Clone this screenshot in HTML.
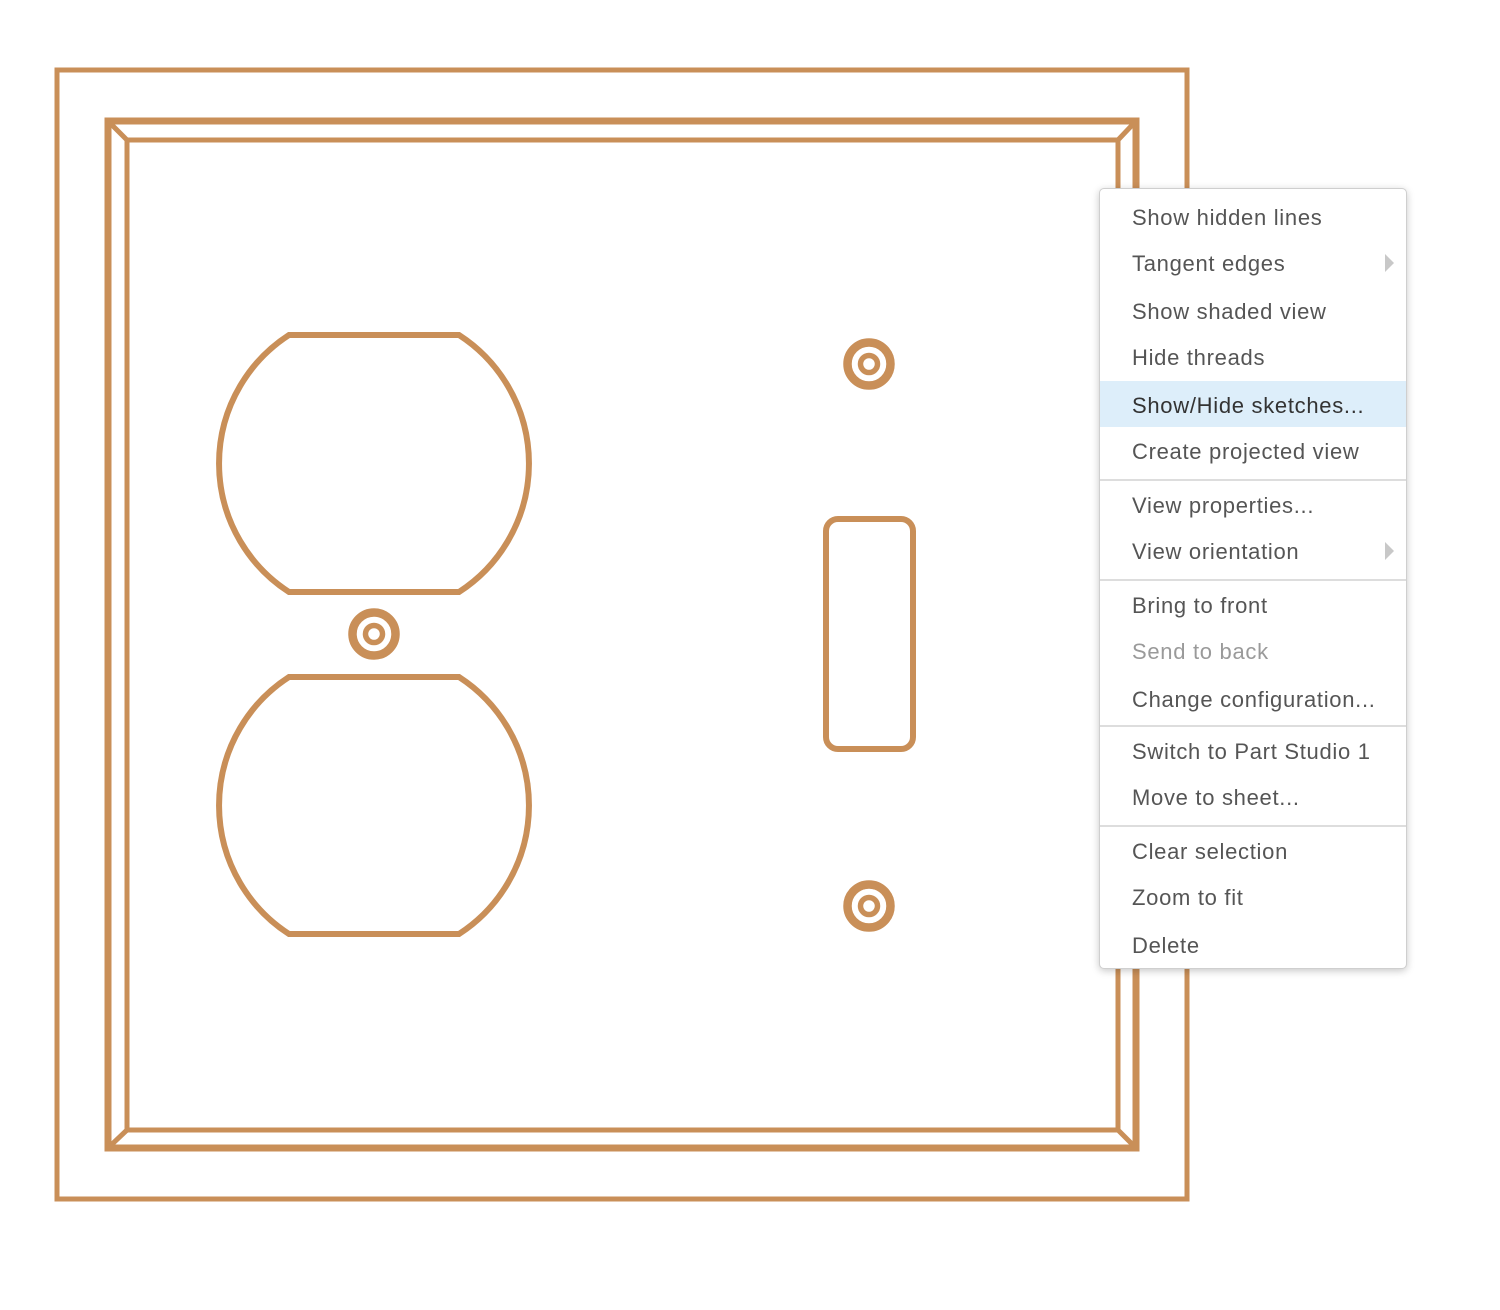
<!DOCTYPE html>
<html><head><meta charset="utf-8"><style>
html,body{margin:0;padding:0;background:#fff;width:1500px;height:1310px;overflow:hidden;position:relative;font-family:"Liberation Sans",sans-serif}
svg{position:absolute;left:0;top:0}
.menu{position:absolute;left:1099px;top:188px;width:306px;height:779px;background:#fff;border:1px solid #cfcfcf;border-radius:5px;box-shadow:0 2px 8px rgba(0,0,0,0.22)}
.it{position:absolute;left:32px;font-size:22px;color:#555;line-height:26px;white-space:nowrap;letter-spacing:0.7px}
.dis{color:#9a9a9a}
.hl{position:absolute;left:0;right:0;top:192px;height:46px;background:#ddeefa}
.sep{position:absolute;left:0;right:0;height:2px;background:#ddd}
.arr{position:absolute;left:285px;width:0;height:0;border-top:9px solid transparent;border-bottom:9px solid transparent;border-left:9px solid #c8c8c8}
</style></head><body>
<svg width="1500" height="1310" viewBox="0 0 1500 1310" fill="none" stroke="#c98f58">
<rect x="57" y="70" width="1130" height="1129" stroke-width="5"/>
<rect x="108" y="121" width="1028" height="1027" stroke-width="7"/>
<rect x="127" y="140" width="991" height="990" stroke-width="5"/>
<path d="M108 121L127 140M1136 121L1118 140M108 1148L127 1130M1136 1148L1118 1130" stroke-width="5"/>
<path d="M289 335L459 335A153 153 0 0 1 459 592L289 592A153 153 0 0 1 289 335Z" stroke-width="6"/>
<path d="M289 677L459 677A153 153 0 0 1 459 934L289 934A153 153 0 0 1 289 677Z" stroke-width="6"/>
<rect x="826" y="519" width="87" height="230" rx="12" stroke-width="6"/>
<g stroke-width="8.5"><circle cx="374" cy="634" r="21.5"/><circle cx="869" cy="364" r="21.5"/><circle cx="869" cy="906" r="21.5"/></g>
<g stroke-width="5.5"><circle cx="374" cy="634" r="8.5"/><circle cx="869" cy="364" r="8.5"/><circle cx="869" cy="906" r="8.5"/></g>
</svg>
<div class="menu">
<div class="hl"></div>
<div class="sep" style="top:290px"></div>
<div class="sep" style="top:390px"></div>
<div class="sep" style="top:536px"></div>
<div class="sep" style="top:636px"></div>
<div class="it" style="top:16px">Show hidden lines</div>
<div class="it" style="top:62px">Tangent edges</div><div class="arr" style="top:65px"></div>
<div class="it" style="top:110px">Show shaded view</div>
<div class="it" style="top:156px">Hide threads</div>
<div class="it" style="top:204px;color:#333">Show/Hide sketches...</div>
<div class="it" style="top:250px">Create projected view</div>
<div class="it" style="top:304px">View properties...</div>
<div class="it" style="top:350px">View orientation</div><div class="arr" style="top:353px"></div>
<div class="it" style="top:404px">Bring to front</div>
<div class="it dis" style="top:450px">Send to back</div>
<div class="it" style="top:498px">Change configuration...</div>
<div class="it" style="top:550px">Switch to Part Studio 1</div>
<div class="it" style="top:596px">Move to sheet...</div>
<div class="it" style="top:650px">Clear selection</div>
<div class="it" style="top:696px">Zoom to fit</div>
<div class="it" style="top:744px">Delete</div>
</div>
</body></html>
